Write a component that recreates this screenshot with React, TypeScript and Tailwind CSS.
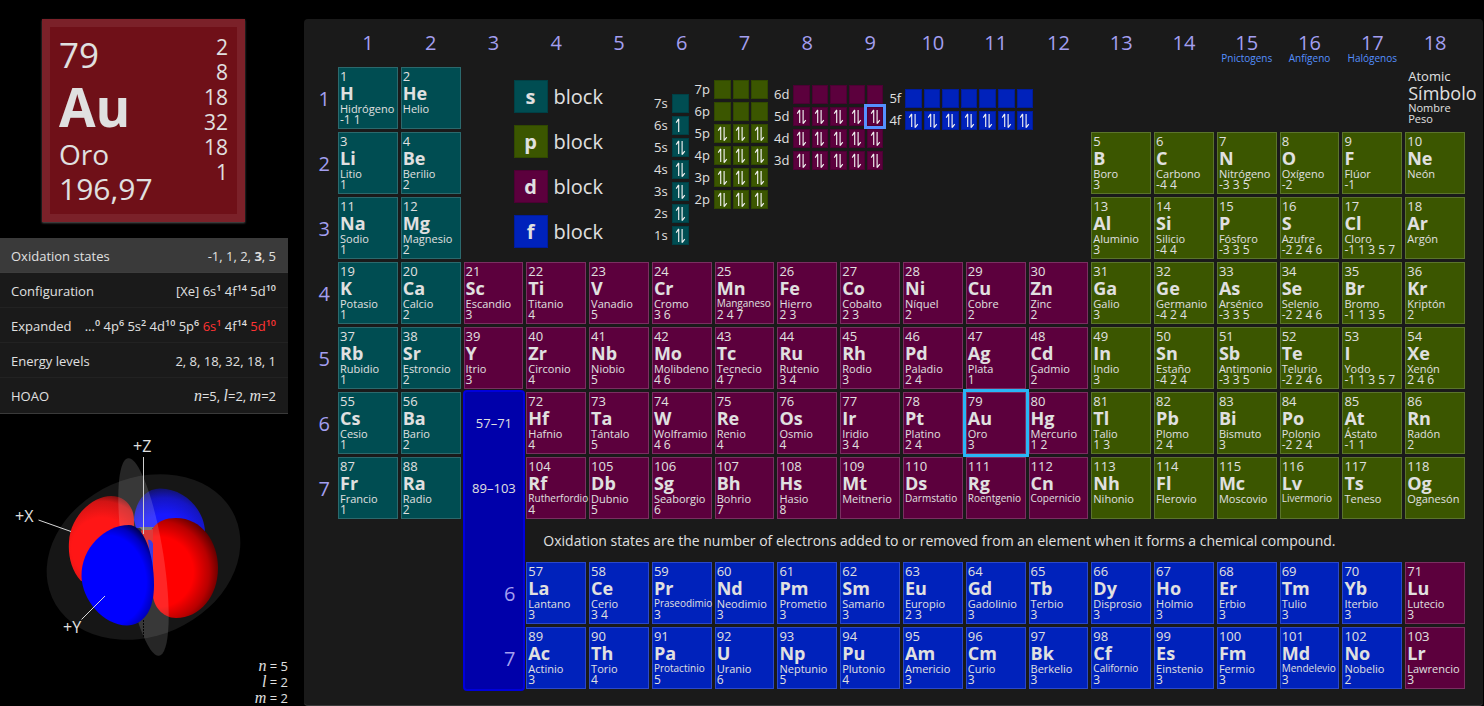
import React from "react";

type Block = "s" | "p" | "d" | "f";

const blockCell: Record<Block, string> = {
  s: "bg-[#004d52] border-[#2b696d]",
  p: "bg-[#3b5600] border-[#5b742b]",
  d: "bg-[#5c003d] border-[#7a2f61]",
  f: "bg-[#0022bb] border-[#2b48c9]",
};

const blockSwatch: Record<Block, string> = {
  s: "bg-[#004d52] border-[#004045]",
  p: "bg-[#3b5600] border-[#304800]",
  d: "bg-[#5c003d] border-[#4c0033]",
  f: "bg-[#0022bb] border-[#001c9c]",
};

// symbol | name | oxidation states, in order of atomic number
const source = `H|Hidrógeno|-1 1
He|Helio|
Li|Litio|1
Be|Berilio|2
B|Boro|3
C|Carbono|-4 4
N|Nitrógeno|-3 3 5
O|Oxígeno|-2
F|Flúor|-1
Ne|Neón|
Na|Sodio|1
Mg|Magnesio|2
Al|Aluminio|3
Si|Silicio|-4 4
P|Fósforo|-3 3 5
S|Azufre|-2 2 4 6
Cl|Cloro|-1 1 3 5 7
Ar|Argón|
K|Potasio|1
Ca|Calcio|2
Sc|Escandio|3
Ti|Titanio|4
V|Vanadio|5
Cr|Cromo|3 6
Mn|Manganeso|2 4 7
Fe|Hierro|2 3
Co|Cobalto|2 3
Ni|Níquel|2
Cu|Cobre|2
Zn|Zinc|2
Ga|Galio|3
Ge|Germanio|-4 2 4
As|Arsénico|-3 3 5
Se|Selenio|-2 2 4 6
Br|Bromo|-1 1 3 5
Kr|Kriptón|2
Rb|Rubidio|1
Sr|Estroncio|2
Y|Itrio|3
Zr|Circonio|4
Nb|Niobio|5
Mo|Molibdeno|4 6
Tc|Tecnecio|4 7
Ru|Rutenio|3 4
Rh|Rodio|3
Pd|Paladio|2 4
Ag|Plata|1
Cd|Cadmio|2
In|Indio|3
Sn|Estaño|-4 2 4
Sb|Antimonio|-3 3 5
Te|Telurio|-2 2 4 6
I|Yodo|-1 1 3 5 7
Xe|Xenón|2 4 6
Cs|Cesio|1
Ba|Bario|2
La|Lantano|3
Ce|Cerio|3 4
Pr|Praseodimio|3
Nd|Neodimio|3
Pm|Prometio|3
Sm|Samario|3
Eu|Europio|2 3
Gd|Gadolinio|3
Tb|Terbio|3
Dy|Disprosio|3
Ho|Holmio|3
Er|Erbio|3
Tm|Tulio|3
Yb|Iterbio|3
Lu|Lutecio|3
Hf|Hafnio|4
Ta|Tántalo|5
W|Wolframio|4 6
Re|Renio|4
Os|Osmio|4
Ir|Iridio|3 4
Pt|Platino|2 4
Au|Oro|3
Hg|Mercurio|1 2
Tl|Talio|1 3
Pb|Plomo|2 4
Bi|Bismuto|3
Po|Polonio|-2 2 4
At|Ástato|-1 1
Rn|Radón|2
Fr|Francio|1
Ra|Radio|2
Ac|Actinio|3
Th|Torio|4
Pa|Protactinio|5
U|Uranio|6
Np|Neptunio|5
Pu|Plutonio|4
Am|Americio|3
Cm|Curio|3
Bk|Berkelio|3
Cf|Californio|3
Es|Einstenio|3
Fm|Fermio|3
Md|Mendelevio|3
No|Nobelio|2
Lr|Lawrencio|3
Rf|Rutherfordio|4
Db|Dubnio|5
Sg|Seaborgio|6
Bh|Bohrio|7
Hs|Hasio|8
Mt|Meitnerio|
Ds|Darmstatio|
Rg|Roentgenio|
Cn|Copernicio|
Nh|Nihonio|
Fl|Flerovio|
Mc|Moscovio|
Lv|Livermorio|
Ts|Teneso|
Og|Oganesón|`;

interface Element {
  z: number;
  symbol: string;
  name: string;
  states: string;
  block: Block;
  row: number;
  column: number;
}

const nobleGases = [0, 2, 10, 18, 36, 54, 86, 118];

// row 1 holds the group headers, rows 2-8 the periods, 9 the note, 10-11 the f series
function locate(z: number): { block: Block; row: number; column: number } {
  if (z >= 57 && z <= 71) return { block: z === 71 ? "d" : "f", row: 10, column: z - 57 + 4 };
  if (z >= 89 && z <= 103) return { block: z === 103 ? "d" : "f", row: 11, column: z - 89 + 4 };
  const period = nobleGases.findIndex((last) => z <= last);
  const fromStart = z - nobleGases[period - 1];
  const fromEnd = nobleGases[period] - z;
  if (z === 2) return { block: "s", row: 2, column: 2 };
  if (fromStart <= 2) return { block: "s", row: period + 1, column: fromStart };
  const group = 18 - fromEnd;
  return { block: group >= 13 ? "p" : "d", row: period + 1, column: group };
}

const elements: Element[] = source.split("\n").map((line, i) => {
  const [symbol, name, states] = line.split("|");
  return { z: i + 1, symbol, name, states, ...locate(i + 1) };
});

// names too wide for a cell at the regular size
const isWide = (name: string) => name.length > 9 || name === "Manganeso";

function ElementCell({ element }: { element: Element }) {
  const { z, symbol, name, states, block, row, column } = element;
  const selected = z === 79;
  return (
    <button
      type="button"
      aria-pressed={selected}
      style={{ gridRow: row, gridColumn: column + 1 }}
      className={`flex min-w-0 flex-col items-start border pl-px text-left whitespace-nowrap ${blockCell[block]} ${
        selected ? "z-10 outline-3 outline-[#29b6f6]" : ""
      }`}
    >
      <span className="text-[13px] leading-4">{z}</span>
      <span className="text-[18px] font-bold leading-[19px]">{symbol}</span>
      <span className={isWide(name) ? "text-[10px] leading-[11px]" : "text-[11px] leading-[11px]"}>{name}</span>
      <span className="text-[12px] leading-[12px]">{states}</span>
    </button>
  );
}

const groupNames: Record<number, string> = { 15: "Pnictogens", 16: "Anfígeno", 17: "Halógenos" };

function GroupHeader({ group }: { group: number }) {
  return (
    <div
      style={{ gridRow: 1, gridColumn: group + 1 }}
      className="flex min-w-0 flex-col items-center pt-3 whitespace-nowrap"
    >
      <span className="text-[20px] leading-6 text-[#a39ff0]">{group}</span>
      {groupNames[group] && (
        <a href="#grupo" className="text-[10px] leading-[6px] text-[#5590ff]">
          {groupNames[group]}
        </a>
      )}
    </div>
  );
}

function Electrons({ count }: { count: number }) {
  return (
    <svg viewBox="0 0 15 18" className="h-[17px] w-[15px] shrink-0" fill="none" stroke="#f2f2f2" strokeWidth="1.2">
      {count > 0 && <path d="M5.6 16V2M5.6 2L3 6" />}
      {count > 1 && <path d="M9.2 2V16.6M9.2 16.6L12 12.8" />}
    </svg>
  );
}

interface Subshell {
  label: string;
  electrons: number[];
}

const full = (label: string, n: number): Subshell => ({ label, electrons: Array(n).fill(2) });
const empty = (label: string, n: number): Subshell => ({ label, electrons: Array(n).fill(0) });

const subshells: { block: Block; className: string; rowClass: string; rows: Subshell[] }[] = [
  {
    block: "s",
    className: "mt-[27px]",
    rowClass: "w-[17px] grid-cols-1",
    rows: [
      empty("7s", 1),
      { label: "6s", electrons: [1] },
      full("5s", 1),
      full("4s", 1),
      full("3s", 1),
      full("2s", 1),
      full("1s", 1),
    ],
  },
  {
    block: "p",
    className: "mt-[13px]",
    rowClass: "w-[54px] grid-cols-3",
    rows: [empty("7p", 3), empty("6p", 3), full("5p", 3), full("4p", 3), full("3p", 3), full("2p", 3)],
  },
  {
    block: "d",
    className: "mt-[18px]",
    rowClass: "w-[90px] grid-cols-5",
    rows: [empty("6d", 5), full("5d", 5), full("4d", 5), full("3d", 5)],
  },
  {
    block: "f",
    className: "mt-[22px]",
    rowClass: "w-[128px] grid-cols-7",
    rows: [empty("5f", 7), full("4f", 7)],
  },
];

function Legend() {
  return (
    <div className="col-start-4 col-end-14 row-start-2 row-end-5 flex items-start pl-[50px]">
      <ul className="mt-[13px] flex flex-col gap-3">
        {(["s", "p", "d", "f"] as Block[]).map((block) => (
          <li key={block} className="flex items-center gap-1.5">
            <span
              className={`flex h-[33px] w-[34px] items-center justify-center border text-[20px] font-bold ${blockSwatch[block]}`}
            >
              {block}
            </span>
            <span className="text-[20px] leading-6">block</span>
          </li>
        ))}
      </ul>
      <div className="ml-[51px] flex items-start gap-1.5">
        {subshells.map(({ block, className, rowClass, rows }) => (
          <div key={block} className={`flex flex-col gap-[3px] ${className}`}>
            {rows.map(({ label, electrons }) => (
              <div key={label} className="flex items-center justify-end gap-1">
                <span className="text-[13px] leading-[19px]">{label}</span>
                <div className={`grid gap-[2px] ${rowClass}`}>
                  {electrons.map((count, i) => (
                    <div
                      key={i}
                      className={`flex h-[19px] min-w-0 items-center justify-center border ${blockSwatch[block]} ${
                        label === "5d" && i === 4 ? "outline-3 outline-[#5590ff]" : ""
                      }`}
                    >
                      <Electrons count={count} />
                    </div>
                  ))}
                </div>
              </div>
            ))}
          </div>
        ))}
      </div>
    </div>
  );
}

function PeriodicTable() {
  return (
    <main className="mt-[19px] mr-px grid min-w-0 flex-1 grid-cols-[31px_repeat(18,minmax(0,1fr))] grid-rows-[45px_repeat(7,62px)_37px_repeat(2,62px)] gap-[3px] rounded-sm border-b border-[#3a3a3a] bg-[#1a1a1a] pr-[18px] pb-4">
      {Array.from({ length: 18 }, (_, i) => (
        <GroupHeader key={i} group={i + 1} />
      ))}
      {Array.from({ length: 7 }, (_, i) => (
        <div
          key={i}
          style={{ gridRow: i + 2, gridColumn: 1 }}
          className="flex items-center justify-end pt-[2px] pr-[5px] text-[20px] text-[#a39ff0]"
        >
          {i + 1}
        </div>
      ))}

      <Legend />

      <div className="col-start-19 row-start-2 flex flex-col pl-[3px] pt-px whitespace-nowrap">
        <span className="text-[13px] leading-4">Atomic</span>
        <span className="text-[18px] leading-[18px]">Símbolo</span>
        <span className="text-[11px] leading-[11px]">Nombre</span>
        <span className="text-[11px] leading-[11px]">Peso</span>
      </div>

      <div className="col-start-4 row-start-7 row-end-12 -my-[2px] -mr-[2px] -ml-px grid grid-rows-subgrid rounded-sm border-2 border-[#0000dc] bg-[#0000aa]">
        <span className="flex items-center justify-center pt-[2px] text-[13px]">57–71</span>
        <span className="flex items-center justify-center pt-[2px] text-[13px]">89–103</span>
        <span className="row-start-4 flex items-center justify-end pt-[2px] pr-2 text-[20px] text-[#a39ff0]">6</span>
        <span className="row-start-5 flex items-center justify-end pt-[2px] pr-2 text-[20px] text-[#a39ff0]">7</span>
      </div>

      <p className="col-start-5 col-end-20 row-start-9 flex items-center pl-[17px] text-[14px]">
        Oxidation states are the number of electrons added to or removed from an element when it forms a chemical
        compound.
      </p>

      {elements.map((element) => (
        <ElementCell key={element.z} element={element} />
      ))}
    </main>
  );
}

function ElementCard() {
  return (
    <section className="mt-[19px] ml-[42px] flex h-[203px] w-[203px] justify-between border-8 border-[#7b2129] bg-[#6f1018] pr-[9px] pl-[9px] shadow-[0_1px_2px_#555]">
      <div className="flex flex-col pt-[6px]">
        <span className="text-[35px] leading-[44px]">79</span>
        <span className="text-[53px] font-bold leading-[60px]">Au</span>
        <span className="text-[28px] leading-[34px]">Oro</span>
        <span className="text-[30px] leading-[35px]">196,97</span>
      </div>
      <div className="flex flex-col pt-[8px] text-right text-[21px] leading-[25px]">
        {[2, 8, 18, 32, 18, 1].map((n, i) => (
          <span key={i}>{n}</span>
        ))}
      </div>
    </section>
  );
}

function Orbital({ shell, count, prefix = " " }: { shell: string; count: number; prefix?: string }) {
  return (
    <>
      {prefix}
      {shell}
      <sup className="top-[-5px] text-[9px] font-semibold">{count}</sup>
    </>
  );
}

function Quantum({ name }: { name: string }) {
  return <i className="font-['Liberation_Serif',serif] text-[16px]">{name}</i>;
}

const properties: { label: string; value: React.ReactNode }[] = [
  {
    label: "Oxidation states",
    value: (
      <>
        -1, 1, 2, <b>3</b>, 5
      </>
    ),
  },
  {
    label: "Configuration",
    value: (
      <>
        [Xe]
        <Orbital shell="6s" count={1} />
        <Orbital shell="4f" count={14} />
        <Orbital shell="5d" count={10} />
      </>
    ),
  },
  {
    label: "Expanded",
    value: (
      <>
        <Orbital shell="..." count={0} prefix="" />
        <Orbital shell="4p" count={6} />
        <Orbital shell="5s" count={2} />
        <Orbital shell="4d" count={10} />
        <Orbital shell="5p" count={6} />
        <span className="text-[#ff3333]">
          <Orbital shell="6s" count={1} />
        </span>
        <Orbital shell="4f" count={14} />
        <span className="text-[#ff3333]">
          <Orbital shell="5d" count={10} />
        </span>
      </>
    ),
  },
  { label: "Energy levels", value: "2, 8, 18, 32, 18, 1" },
  {
    label: "HOAO",
    value: (
      <>
        <Quantum name="n" />
        =5, <Quantum name="l" />
        =2, <Quantum name="m" />
        =2
      </>
    ),
  },
];

function PropertyList() {
  return (
    <ul className="mt-4 border-b border-[#3a3a3a] text-[13px] leading-[18px]">
      {properties.map(({ label, value }, i) => (
        <li key={label}>
          <button
            type="button"
            aria-pressed={i === 0}
            className={`flex h-[35px] w-full items-center justify-between border-b pt-[2px] pr-3 pl-[11px] whitespace-nowrap ${
              i === 0 ? "border-[#3d3d3d] bg-[#3a3a3a]" : i === 4 ? "border-[#1a1a1a] bg-[#1a1a1a]" : "border-[#222222] bg-[#1a1a1a]"
            }`}
          >
            <span>{label}</span>
            <span>{value}</span>
          </button>
        </li>
      ))}
    </ul>
  );
}

function OrbitalView() {
  return (
    <figure className="relative">
      <svg viewBox="0 0 288 286" className="block w-full" aria-label="5d orbital">
        <defs>
          <radialGradient id="red-front" gradientUnits="userSpaceOnUse" cx="158" cy="152" r="64">
            <stop offset="0.55" stopColor="#ff0000" />
            <stop offset="0.8" stopColor="#b80000" />
            <stop offset="1" stopColor="#500000" />
          </radialGradient>
          <radialGradient id="blue-front" gradientUnits="userSpaceOnUse" cx="0" cy="0" r="1" gradientTransform="translate(110 160) rotate(-8) scale(50 62)">
            <stop offset="0.72" stopColor="#0000ff" />
            <stop offset="0.88" stopColor="#0000c0" />
            <stop offset="1" stopColor="#000060" />
          </radialGradient>
          <radialGradient id="red-back" gradientUnits="userSpaceOnUse" cx="102" cy="128" r="55">
            <stop offset="0.55" stopColor="#ff1616" />
            <stop offset="0.85" stopColor="#d01414" />
            <stop offset="1" stopColor="#6a1010" />
          </radialGradient>
          <radialGradient id="blue-back" gradientUnits="userSpaceOnUse" cx="164" cy="122" r="55">
            <stop offset="0.5" stopColor="#1818ff" />
            <stop offset="0.8" stopColor="#1515c4" />
            <stop offset="1" stopColor="#121260" />
          </radialGradient>
        </defs>
        <ellipse cx="143.5" cy="137" rx="100" ry="79" transform="rotate(-24 143.5 137)" fill="#161616" />
        <path d="M160 68.5C185 68.5 204 90 205 111V130H153V108H136L134 100C135 82 145 68.5 160 68.5Z" fill="url(#blue-back)" />
        <path d="M111 76C126 76 134 88 134 100C134 120 130 150 110 165L81 161C71 150 68 135 69 122C70 97 92 76 111 76Z" fill="url(#red-back)" />
        <path d="M142 109H153V140L148 130L141 112Z" fill="#d81818" />
        <path d="M139 107H154L151 110H142Z" fill="#666" />
        <path d="M148 120C151 119 154 122 155 135V165L151 145Z" fill="#1a1ae0" />
        <path d="M176 98C202 98 218 122 218 148C218 176 200 198 176 198C162 198 153 185 153 175V108C158 101 166 98 176 98Z" fill="url(#red-front)" />
        <ellipse cx="143.5" cy="137" rx="100" ry="20" transform="rotate(81 143.5 137)" fill="#ffffff" fillOpacity="0.15" />
        <path d="M143.5 200V217" stroke="#050505" strokeDasharray="2 1" />
        <path d="M143.5 37V114" stroke="#cfcfcf" />
        <path d="M129 105C143 105 154 132 154 165C154 193 142 205 127 205.5C103 205 82 180 81.5 156C81 128 105 105 129 105Z" fill="url(#blue-front)" />
        <path d="M38.5 100L71 111.5" stroke="#d8d8d8" />
        <path d="M81.5 199.5L105 176" stroke="#d8d8d8" />
        <g fill="#e0e0e0" fontSize="16">
          <text x="133" y="32">+Z</text>
          <text x="15" y="102">+X</text>
          <text x="63" y="213">+Y</text>
        </g>
      </svg>
      <figcaption className="absolute right-0 bottom-0 text-right text-[13px] leading-4">
        <div>
          <Quantum name="n" /> = 5
        </div>
        <div>
          <Quantum name="l" /> = 2
        </div>
        <div>
          <Quantum name="m" /> = 2
        </div>
      </figcaption>
    </figure>
  );
}

export default function App() {
  return (
    <div className="flex min-h-screen items-start gap-4 overflow-hidden bg-black font-['Open_Sans','Noto_Sans',sans-serif] text-[#e0e0e0]">
      <aside className="w-[288px] shrink-0">
        <ElementCard />
        <PropertyList />
        <div className="mt-[6px]">
          <OrbitalView />
        </div>
      </aside>
      <PeriodicTable />
    </div>
  );
}
